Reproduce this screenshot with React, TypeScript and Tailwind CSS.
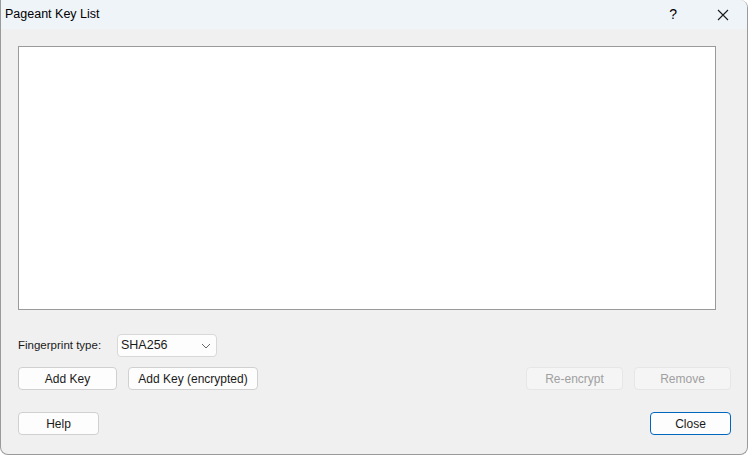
import React from 'react';

const Btn: React.FC<{ label: string; w: string; disabled?: boolean; primary?: boolean }> = ({ label, w, disabled, primary }) => {
    let cls = 'border-[#d0d0d0] bg-[#fdfdfd] text-[#1a1a1a]';
    if (disabled) cls = 'border-[#e6e6e6] bg-[#f5f5f5] text-[#a0a0a0]';
    if (primary) cls = 'border-[#0067c0] bg-[#fdfdfd] text-[#1a1a1a]';
    return (
        <div className={`h-[23px] ${w} flex items-center justify-center rounded-[4px] border ${cls}`}>
            {label}
        </div>
    );
};

const App: React.FC = () => {
    return (
        <div className="w-[750px] h-[455px] bg-white" style={{ fontFamily: '"Liberation Sans", Arial, sans-serif' }}>
            <div className="w-[748px] h-[455px] flex flex-col bg-[#f0f0f0] border border-t-0 border-[#9a9a9a] rounded-tr-lg rounded-b-lg overflow-hidden text-[12px] text-[#1a1a1a]">
                {/* title bar */}
                <div className="h-[29px] flex items-center bg-[#eff4f9] shrink-0">
                    <span className="pl-[4px] text-[12.5px] text-black">Pageant Key List</span>
                    <span className="ml-auto mr-[40px] text-[14px] text-black">?</span>
                    <svg className="mr-[18px]" width="12" height="12" viewBox="0 0 12 12">
                        <path d="M1 1L11 11M11 1L1 11" stroke="#1a1a1a" strokeWidth="1.1" />
                    </svg>
                </div>

                <div className="flex flex-col pl-[17px] pr-[16px]">
                    {/* key list */}
                    <div className="mt-[17px] w-[698px] h-[264px] bg-white border border-[#9a9a9a]" />

                    <div className="mt-[24px] flex items-center">
                        <span className="w-[99px] text-[11.5px]">Fingerprint type:</span>
                        <div className="h-[23px] w-[100px] flex items-center justify-between pl-[3px] pr-[5px] bg-[#fdfdfd] border border-[#d8d8d8] rounded-[4px] text-[12.5px]">
                            <span>SHA256</span>
                            <svg width="10" height="6" viewBox="0 0 10 6">
                                <path d="M1 1L5 5L9 1" fill="none" stroke="#666" strokeWidth="1" />
                            </svg>
                        </div>
                    </div>

                    <div className="mt-[10px] flex items-center">
                        <Btn label="Add Key" w="w-[99px]" />
                        <div className="ml-[11px]">
                            <Btn label="Add Key (encrypted)" w="w-[130px]" />
                        </div>
                        <div className="ml-auto flex gap-[11px]">
                            <Btn label="Re-encrypt" w="w-[97px]" disabled />
                            <Btn label="Remove" w="w-[97px]" disabled />
                        </div>
                    </div>

                    <div className="mt-[22px] flex items-center">
                        <Btn label="Help" w="w-[81px]" />
                        <div className="ml-auto">
                            <Btn label="Close" w="w-[81px]" primary />
                        </div>
                    </div>
                </div>
            </div>
        </div>
    );
};

export default App;
